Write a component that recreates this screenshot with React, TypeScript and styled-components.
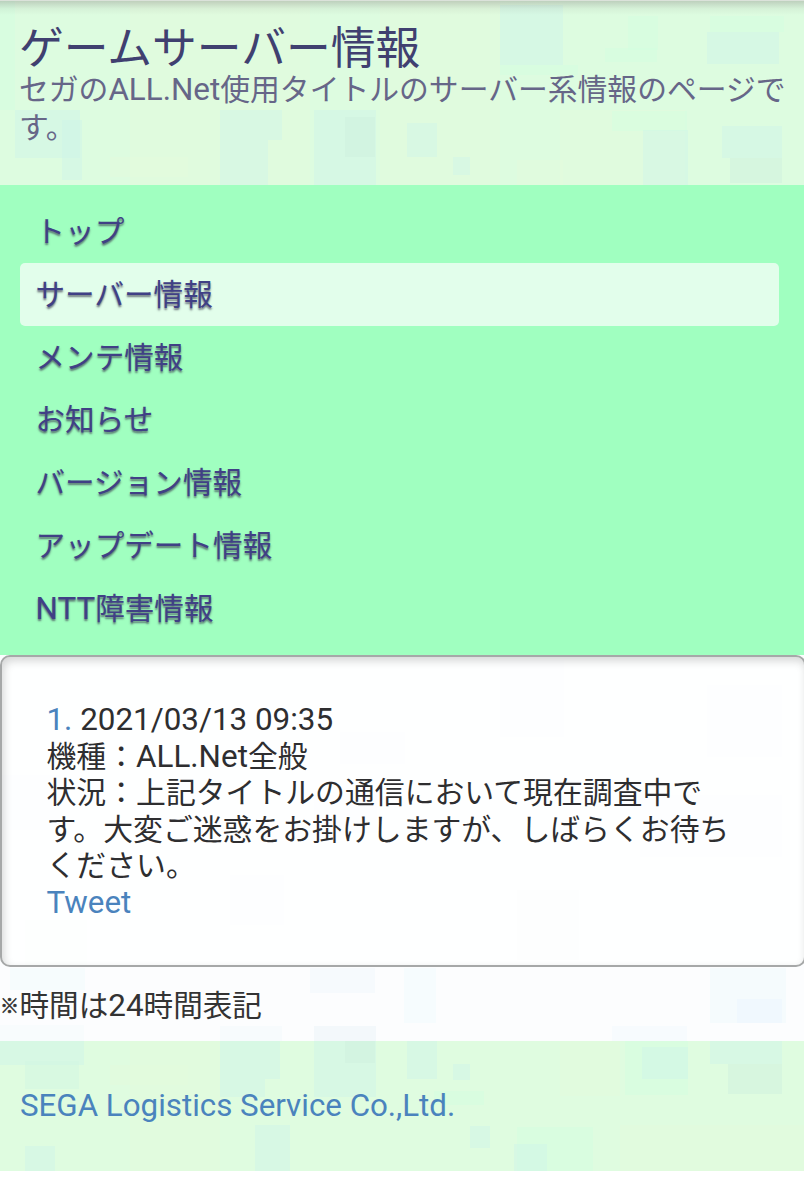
import React from 'react';
import styled, { createGlobalStyle } from 'styled-components';

const GlobalStyle = createGlobalStyle`
  * { box-sizing: border-box; }
  html { background: #fff; }
  body {
    margin: 0;
    color: #333;
    font-family: Roboto, 'Noto Sans CJK JP', sans-serif;
    font-size: 29.6px;
    line-height: 36.6px;
    overflow: hidden;
  }
  h1, h2, p, ul { margin: 0; padding: 0; font-weight: 400; }
`;

const Page = styled.div`
  width: 804px;
  height: 1200px;
  overflow: hidden;
`;

const Section = styled.div`
  position: relative;
  isolation: isolate;
`;

const MosaicLayer = styled.svg`
  position: absolute;
  inset: 0;
  width: 100%;
  height: 100%;
  z-index: -1;
`;

const Header = styled(Section)`
  height: 185px;
  padding: 26px 0 0 19px;
  background: #ddfce0;

  &::before {
    content: '';
    position: absolute;
    inset: 0 0 auto;
    height: 14px;
    border-top: 1px solid #dbe2da;
    background: linear-gradient(rgba(90, 70, 80, 0.24), rgba(90, 70, 80, 0.06) 55%, transparent);
  }
`;

const Title = styled.h1`
  font-size: 44.8px;
  line-height: 46px;
  color: #404070;
`;

const Subtitle = styled.p`
  margin-top: -1px;
  font-size: 29.8px;
  line-height: 37.5px;
  color: #666688;
`;

/* Western text is set slightly larger than the Japanese around it. */
const Latin = styled.span`
  font-size: 31.4px;
  line-height: 1;
`;

const Nav = styled.nav`
  height: 470px;
  padding: 15px 25px 0 20px;
  background: #a0ffc0;
`;

const NavList = styled.ul`
  list-style: none;
`;

const NavItem = styled.li<{ $active?: boolean }>`
  height: 62.8px;
  padding: 1px 16px 0 15.5px;
  line-height: 62px;
  border-radius: 5px;
  background: ${(p) => (p.$active ? '#e2feeb' : 'transparent')};
  color: #404085;
  text-shadow: 0 2px 2px rgba(60, 60, 80, 0.7);
`;

const Main = styled(Section)`
  height: 386px;
  background: #fcfdfe;
`;

const Card = styled.article`
  width: 806px;
  height: 312px;
  padding: 45px 60px 0 44.5px;
  border: 2px solid #a6a8a8;
  border-radius: 10px;
  background: rgba(255, 255, 255, 0.75);
  box-shadow: inset 2px 4px 9px rgba(0, 0, 0, 0.16);
  color: #2e2e30;
  font-size: 29.85px;
`;

const Link = styled.a`
  color: #4a83bd;
  font-size: 31.3px;
  line-height: 1;
  text-decoration: none;
`;

const Note = styled.p`
  padding-top: 21px;
`;

const NoteMark = styled.span`
  display: inline-block;
  width: 19.5px;
  font-size: 19px;
  font-weight: 700;
  line-height: 1;
  vertical-align: 3px;
  -webkit-text-stroke: 0.6px currentColor;
`;

const Footer = styled(Section)`
  height: 130px;
  padding: 47px 20px 0;
  background: #dffce0;
`;

type Block = [x: number, y: number, w: number, h: number, fill: string];

const CYAN = '#cdf4ea';
const MINT = '#d2ffe0';
const SAND = '#e5fbdc';
const GREY = '#cdeedd';

const headerBlocks: Block[] = [
  [0, 0, 15, 110, MINT], [130, 0, 180, 185, SAND], [380, 0, 120, 185, SAND],
  [500, 5, 63, 60, CYAN], [500, 65, 78, 10, MINT], [628, 16, 30, 34, MINT],
  [605, 48, 52, 14, MINT], [707, 32, 72, 32, CYAN], [710, 16, 74, 16, MINT],
  [15, 110, 65, 48, CYAN], [62, 120, 20, 60, CYAN], [220, 110, 62, 30, CYAN],
  [220, 140, 48, 45, CYAN], [314, 110, 62, 75, CYAN], [345, 117, 30, 40, GREY],
  [407, 123, 30, 34, CYAN], [453, 157, 17, 18, CYAN], [560, 110, 125, 75, SAND],
  [612, 111, 75, 20, MINT], [643, 130, 45, 55, CYAN], [722, 126, 60, 32, CYAN],
  [730, 158, 52, 25, GREY], [110, 157, 78, 20, SAND], [517, 160, 46, 25, SAND],
];

const mainBlocks: Block[] = [
  [500, 5, 64, 77, '#f0fbff'], [707, 30, 75, 72, '#f3fbff'], [340, 77, 65, 32, '#f0f8ff'],
  [314, 140, 63, 38, '#edf8ff'], [0, 120, 60, 55, '#f4fafd'], [230, 220, 54, 50, '#f0faff'],
  [640, 140, 142, 62, '#f0f7ff'], [517, 235, 62, 70, '#f1fbfa'], [25, 265, 62, 45, '#effcfa'],
  [10, 313, 75, 22, '#effafd'], [310, 313, 65, 25, '#eef6fc'], [404, 313, 32, 55, '#effaff'],
  [710, 313, 76, 55, '#edf8fc'], [737, 344, 45, 24, '#eaf3ff'], [220, 371, 62, 15, '#f0f7fc'],
  [314, 371, 62, 15, '#e8f0f8'], [612, 371, 75, 15, '#f0f9fe'], [0, 370, 84, 16, '#f4fbfd'],
];

const footerBlocks: Block[] = [
  [0, 0, 84, 24, CYAN], [25, 20, 54, 28, '#d0f5e3'], [130, 0, 90, 130, SAND],
  [220, 0, 60, 38, CYAN], [220, 38, 45, 18, CYAN], [314, 0, 62, 56, CYAN],
  [345, 0, 30, 22, GREY], [407, 0, 30, 38, CYAN], [453, 23, 17, 16, CYAN],
  [560, 0, 60, 55, SAND], [625, 0, 63, 54, MINT], [642, 6, 46, 32, CYAN],
  [710, 0, 72, 23, CYAN], [728, 23, 54, 30, GREY], [255, 84, 35, 46, CYAN],
  [470, 85, 20, 22, CYAN], [517, 86, 76, 44, MINT], [514, 103, 33, 27, CYAN],
  [620, 84, 184, 46, SAND], [25, 105, 30, 25, CYAN], [110, 24, 78, 20, SAND],
  [434, 50, 50, 14, MINT],
];

function Mosaic({ blocks }: { blocks: Block[] }) {
  return (
    <MosaicLayer aria-hidden="true">
      {blocks.map(([x, y, width, height, fill], i) => (
        <rect key={i} x={x} y={y} width={width} height={height} fill={fill} opacity={0.42} />
      ))}
    </MosaicLayer>
  );
}

const navItems: { latin?: string; label: string; active?: boolean }[] = [
  { label: 'トップ' },
  { label: 'サーバー情報', active: true },
  { label: 'メンテ情報' },
  { label: 'お知らせ' },
  { label: 'バージョン情報' },
  { label: 'アップデート情報' },
  { latin: 'NTT', label: '障害情報' },
];

export default function App() {
  return (
    <Page lang="ja">
      <GlobalStyle />
      <Header as="header">
        <Mosaic blocks={headerBlocks} />
        <Title>ゲームサーバー情報</Title>
        <Subtitle>
          セガの<Latin>ALL.Net</Latin>使用タイトルのサーバー系情報のページです。
        </Subtitle>
      </Header>
      <Nav>
        <NavList>
          {navItems.map(({ latin, label, active }) => (
            <NavItem key={label} $active={active}>
              {latin && <Latin>{latin}</Latin>}
              {label}
            </NavItem>
          ))}
        </NavList>
      </Nav>
      <Main as="main">
        <Mosaic blocks={mainBlocks} />
        <Card>
          <p><Link>1.</Link><Latin> 2021/03/13 09:35</Latin></p>
          <p>機種：<Latin>ALL.Net</Latin>全般</p>
          <p>状況：上記タイトルの通信において現在調査中です。大変ご迷惑をお掛けしますが、しばらくお待ちください。</p>
          <p><Link>Tweet</Link></p>
        </Card>
        <Note><NoteMark>※</NoteMark>時間は<Latin>24</Latin>時間表記</Note>
      </Main>
      <Footer as="footer">
        <Mosaic blocks={footerBlocks} />
        <Link>SEGA Logistics Service Co.,Ltd.</Link>
      </Footer>
    </Page>
  );
}
